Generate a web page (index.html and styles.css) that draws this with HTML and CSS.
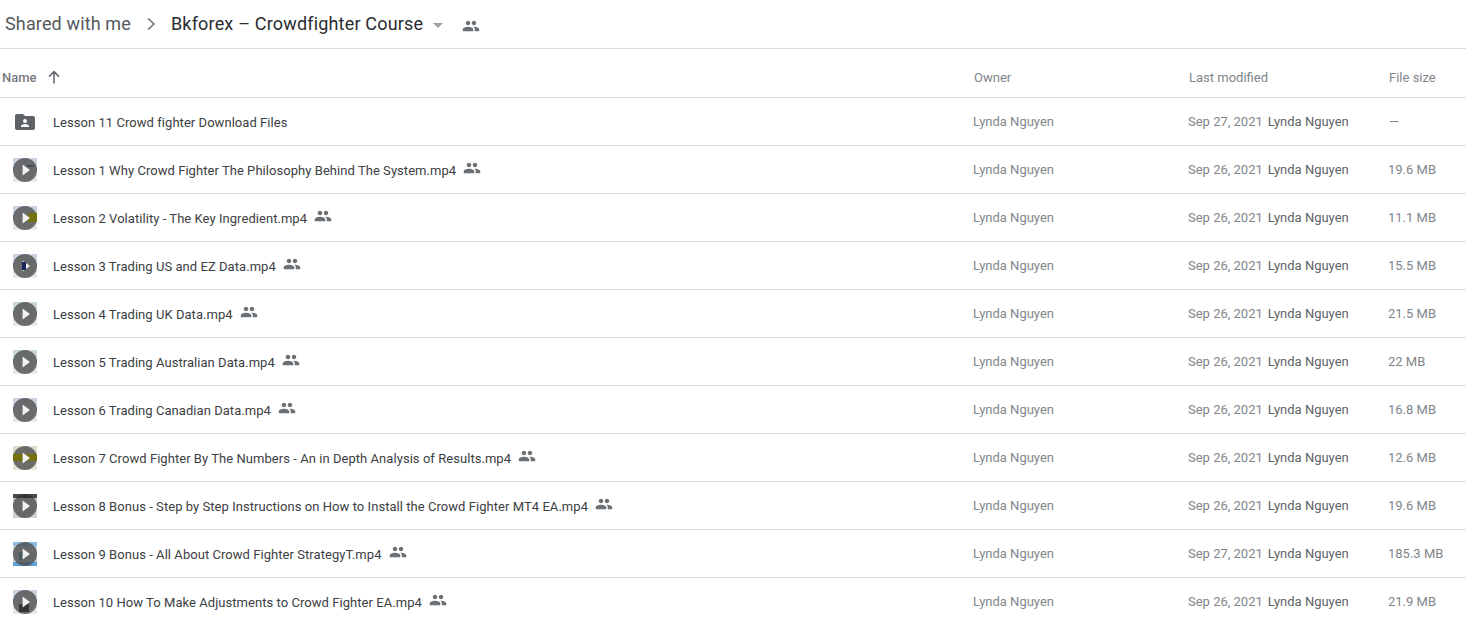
FILE: index.html
```html
<!DOCTYPE html>
<html lang="en">
<head>
<meta charset="utf-8">
<title>Bkforex – Crowdfighter Course</title>
<link rel="stylesheet" href="styles.css">
</head>
<body>
<svg class="defs" width="0" height="0" aria-hidden="true">
  <symbol id="people" viewBox="0 0 24 24"><path d="M16 11c1.66 0 2.99-1.34 2.99-3S17.66 5 16 5s-3 1.34-3 3 1.34 3 3 3zm-8 0c1.66 0 2.99-1.34 2.99-3S9.66 5 8 5 5 6.34 5 8s1.34 3 3 3zm0 2c-2.33 0-7 1.17-7 3.5V19h14v-2.5C15 14.17 10.33 13 8 13zm8 0c-.29 0-.62.02-.97.05C16.19 13.89 17 15.02 17 16.5V19h6v-2.5c0-2.33-4.67-3.5-7-3.5z"/></symbol>
  <symbol id="disc" viewBox="0 0 24 24"><circle cx="12" cy="12" r="12" fill="#4a4a4a" fill-opacity=".78"/></symbol>
  <symbol id="tri" viewBox="0 0 24 24"><path d="M9.6 6.6v10.8l7.4-5.4z" fill="#f2f2f2"/></symbol>
</svg>
<header class="crumbs">
  <span class="crumb shared">Shared with me</span>
  <svg class="chev" width="24" height="24" viewBox="0 0 24 24"><path d="M9 6.5l6 5.5-6 5.5" fill="none" stroke="#6f7478" stroke-width="1.6"/></svg>
  <span class="crumb current">Bkforex – Crowdfighter Course</span>
  <span class="caret"></span>
  <svg class="people head-people"><use href="#people"/></svg>
</header>
<main class="table">
  <div class="row head">
    <div class="c-name head-name">Name
      <svg class="arrow" width="16" height="16" viewBox="0 0 16 16"><path d="M8 14.5V3M3 7.6L8 2.6l5 5" fill="none" stroke="#5f6368" stroke-width="1.5"/></svg>
    </div>
    <div class="c-owner head-owner">Owner</div>
    <div class="c-mod head-mod">Last modified</div>
    <div class="c-size head-size">File size</div>
  </div>

  <div class="row">
    <div class="c-name">
      <svg class="thumb" viewBox="0 0 24 24"><path fill="#5f6368" d="M20 6h-8l-2-2H4c-1.1 0-2 .9-2 2v12c0 1.1.9 2 2 2h16c1.1 0 2-.9 2-2V8c0-1.1-.9-2-2-2zm-8 3a2 2 0 1 1 0 4 2 2 0 0 1 0-4zm4 8H8v-1c0-1.33 2.67-2 4-2s4 .67 4 2v1z"/></svg>
      <span class="fname">Lesson 11 Crowd fighter Download Files</span>
    </div>
    <div class="c-owner">Lynda Nguyen</div>
    <div class="c-mod"><span class="date">Sep 27, 2021</span><span class="by">Lynda Nguyen</span></div>
    <div class="c-size dash">—</div>
  </div>

  <div class="row">
    <div class="c-name"><svg class="vid bg-cool" viewBox="0 0 24 24"><use href="#disc"/><rect class="smudge" x="14" y="7" width="7" height="2"/><use href="#tri"/></svg><span class="fname">Lesson 1 Why Crowd Fighter The Philosophy Behind The System.mp4</span><svg class="people"><use href="#people"/></svg></div>
    <div class="c-owner">Lynda Nguyen</div>
    <div class="c-mod"><span class="date">Sep 26, 2021</span><span class="by">Lynda Nguyen</span></div>
    <div class="c-size">19.6 MB</div>
  </div>
  <div class="row">
    <div class="c-name"><svg class="vid bg-cool" viewBox="0 0 24 24"><use href="#disc"/><rect class="olive" x="15" y="7" width="9" height="9"/><use href="#tri"/></svg><span class="fname">Lesson 2 Volatility - The Key Ingredient.mp4</span><svg class="people"><use href="#people"/></svg></div>
    <div class="c-owner">Lynda Nguyen</div>
    <div class="c-mod"><span class="date">Sep 26, 2021</span><span class="by">Lynda Nguyen</span></div>
    <div class="c-size">11.1 MB</div>
  </div>
  <div class="row">
    <div class="c-name"><svg class="vid bg-cool" viewBox="0 0 24 24"><use href="#disc"/><use href="#tri"/><rect class="navy" x="9" y="8" width="4" height="8"/></svg><span class="fname">Lesson 3 Trading US and EZ Data.mp4</span><svg class="people"><use href="#people"/></svg></div>
    <div class="c-owner">Lynda Nguyen</div>
    <div class="c-mod"><span class="date">Sep 26, 2021</span><span class="by">Lynda Nguyen</span></div>
    <div class="c-size">15.5 MB</div>
  </div>
  <div class="row">
    <div class="c-name"><svg class="vid bg-green" viewBox="0 0 24 24"><use href="#disc"/><use href="#tri"/></svg><span class="fname">Lesson 4 Trading UK Data.mp4</span><svg class="people"><use href="#people"/></svg></div>
    <div class="c-owner">Lynda Nguyen</div>
    <div class="c-mod"><span class="date">Sep 26, 2021</span><span class="by">Lynda Nguyen</span></div>
    <div class="c-size">21.5 MB</div>
  </div>
  <div class="row">
    <div class="c-name"><svg class="vid bg-green" viewBox="0 0 24 24"><use href="#disc"/><use href="#tri"/></svg><span class="fname">Lesson 5 Trading Australian Data.mp4</span><svg class="people"><use href="#people"/></svg></div>
    <div class="c-owner">Lynda Nguyen</div>
    <div class="c-mod"><span class="date">Sep 26, 2021</span><span class="by">Lynda Nguyen</span></div>
    <div class="c-size">22 MB</div>
  </div>
  <div class="row">
    <div class="c-name"><svg class="vid bg-cool" viewBox="0 0 24 24"><use href="#disc"/><use href="#tri"/></svg><span class="fname">Lesson 6 Trading Canadian Data.mp4</span><svg class="people"><use href="#people"/></svg></div>
    <div class="c-owner">Lynda Nguyen</div>
    <div class="c-mod"><span class="date">Sep 26, 2021</span><span class="by">Lynda Nguyen</span></div>
    <div class="c-size">16.8 MB</div>
  </div>
  <div class="row">
    <div class="c-name"><svg class="vid bg-warm" viewBox="0 0 24 24"><use href="#disc"/><rect class="olive" x="0" y="8" width="24" height="7"/><use href="#tri"/></svg><span class="fname">Lesson 7 Crowd Fighter By The Numbers - An in Depth Analysis of Results.mp4</span><svg class="people"><use href="#people"/></svg></div>
    <div class="c-owner">Lynda Nguyen</div>
    <div class="c-mod"><span class="date">Sep 26, 2021</span><span class="by">Lynda Nguyen</span></div>
    <div class="c-size">12.6 MB</div>
  </div>
  <div class="row">
    <div class="c-name"><svg class="vid bg-grey" viewBox="0 0 24 24"><use href="#disc"/><rect class="black" x="0" y="0" width="24" height="4"/><use href="#tri"/></svg><span class="fname">Lesson 8 Bonus - Step by Step Instructions on How to Install the Crowd Fighter MT4 EA.mp4</span><svg class="people"><use href="#people"/></svg></div>
    <div class="c-owner">Lynda Nguyen</div>
    <div class="c-mod"><span class="date">Sep 26, 2021</span><span class="by">Lynda Nguyen</span></div>
    <div class="c-size">19.6 MB</div>
  </div>
  <div class="row">
    <div class="c-name"><svg class="vid bg-blue" viewBox="0 0 24 24"><use href="#disc"/><rect class="teal" x="6" y="10" width="4" height="8"/><use href="#tri"/></svg><span class="fname">Lesson 9 Bonus - All About Crowd Fighter StrategyT.mp4</span><svg class="people"><use href="#people"/></svg></div>
    <div class="c-owner">Lynda Nguyen</div>
    <div class="c-mod"><span class="date">Sep 27, 2021</span><span class="by">Lynda Nguyen</span></div>
    <div class="c-size">185.3 MB</div>
  </div>
  <div class="row last">
    <div class="c-name"><svg class="vid bg-cool" viewBox="0 0 24 24"><use href="#disc"/><rect class="black" x="6" y="14" width="10" height="8"/><use href="#tri"/></svg><span class="fname">Lesson 10 How To Make Adjustments to Crowd Fighter EA.mp4</span><svg class="people"><use href="#people"/></svg></div>
    <div class="c-owner">Lynda Nguyen</div>
    <div class="c-mod"><span class="date">Sep 26, 2021</span><span class="by">Lynda Nguyen</span></div>
    <div class="c-size">21.9 MB</div>
  </div>
</main>
</body>
</html>
```
FILE: styles.css
```css
* { box-sizing: border-box; }
html, body { margin: 0; height: 100%; overflow: hidden; background: #fff; }
body { font-family: Roboto, "Liberation Sans", sans-serif; font-size: 13px; color: #3c4043; }
.defs { position: absolute; }

.crumbs {
  height: 49px;
  display: flex;
  align-items: center;
  padding-left: 5px;
  border-bottom: 1px solid #dadce0;
}
.crumb { font-size: 18px; line-height: 24px; }
.shared { color: #55595d; letter-spacing: .14px; }
.current { color: #2a2c30; letter-spacing: .18px; }
.chev { margin: 0 8px 0 8px; }
.caret {
  width: 0; height: 0;
  margin: 2px 0 0 10px;
  border-left: 5.5px solid transparent;
  border-right: 5.5px solid transparent;
  border-top: 5.5px solid #9aa0a6;
}
.people { width: 18px; height: 18px; fill: #6b7075; flex: none; }
.head-people { margin: 3px 0 0 19px; }

.row {
  display: grid;
  grid-template-columns: 973px 215px 200px 1fr;
  height: 48px;
  align-items: center;
  border-bottom: 1px solid #dadce0;
}
.row.head { height: 49px; padding-top: 8px; color: #80868b; }
.c-name { display: flex; align-items: center; padding-left: 13px; min-width: 0; }
.head-name { padding-left: 2px; font-weight: 500; color: #757a7f; }
.arrow { margin-left: 9px; }
.head-owner, .head-mod { padding-left: 1px; }
.head-size, .dash { padding-left: 1px; }

.thumb { width: 24px; height: 24px; flex: none; }
.vid { display: block; width: 24px; height: 24px; flex: none; }
.bg-cool { background: linear-gradient(#c6d0de, #e6e9e8); }
.bg-green { background: linear-gradient(#c4d6cf, #e6ebe6); }
.bg-warm { background: linear-gradient(#dcdccc, #e6e6da); }
.bg-grey { background: #d0d0d0; }
.bg-blue { background: linear-gradient(#8fbcdc 0 18%, #c9d6da 18% 84%, #5fa5dc 84%); }
.smudge { fill: #2e3540; fill-opacity: .55; }
.olive { fill: #75710f; }
.navy { fill: #14285e; }
.black { fill: #26282c; fill-opacity: .8; }
.teal { fill: #3e5a55; fill-opacity: .75; }

.fname { margin: 2px 0 0 16px; white-space: nowrap; line-height: 16px; letter-spacing: .05px; }
.c-name .people { margin: -3px 0 0 7px; }
.c-owner, .date, .c-size { color: #80868b; }
.by { margin-left: 5px; color: #5f6368; }
.c-mod { white-space: nowrap; }
```
